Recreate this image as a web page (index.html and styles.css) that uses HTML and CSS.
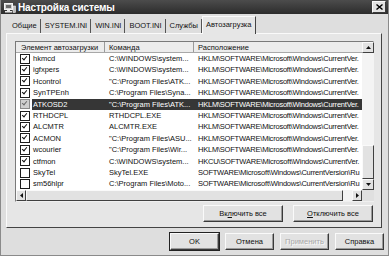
FILE: index.html
```html
<!DOCTYPE html>
<html lang="ru">
<head>
    <meta charset="UTF-8">
    <title>Настройка системы</title>
    <link rel="stylesheet" href="styles.css">
</head>
<body>
<div class="window">
    <div class="titlebar">
        <svg class="app-icon" width="12" height="11" viewBox="0 0 12 11">
            <rect x="0.5" y="1.5" width="8" height="6" fill="#cfcfcf" stroke="#f4f4f4"/>
            <rect x="2" y="3" width="5" height="3" fill="#6a6a6a"/>
            <rect x="3" y="8" width="3" height="1" fill="#e8e8e8"/>
            <rect x="1" y="9" width="7" height="1.5" fill="#e8e8e8"/>
            <rect x="9" y="4" width="2.5" height="6.5" fill="#bdbdbd" stroke="#f0f0f0" stroke-width="0.6"/>
        </svg>
        <span class="title">Настройка системы</span>
        <span class="close-btn">
            <svg width="7" height="6" viewBox="0 0 7 6">
                <path d="M0.5 0.5 L6.5 5.5 M6.5 0.5 L0.5 5.5" stroke="#000" stroke-width="1.4"/>
            </svg>
        </span>
    </div>

    <div class="tabs">
        <span class="tab">Общие</span>
        <span class="tab">SYSTEM.INI</span>
        <span class="tab">WIN.INI</span>
        <span class="tab">BOOT.INI</span>
        <span class="tab">Службы</span>
        <span class="tab active">Автозагрузка</span>
    </div>

    <div class="panel">
        <div class="listview">
            <div class="lv-content">
                <div class="lv-header">
                    <div class="hcell c1">Элемент автозагрузки</div>
                    <div class="hcell c2">Команда</div>
                    <div class="hcell c3">Расположение</div>
                </div>
                <div class="lv-rows">
                    <div class="row">
                        <span class="chk-cell"><span class="check on"></span></span>
                        <span class="row-body"><span class="cell c1">hkmcd</span><span class="cell c2">C:\WINDOWS\system...</span><span class="cell c3">HKLM\SOFTWARE\Microsoft\Windows\CurrentVer.</span></span>
                    </div>
                    <div class="row">
                        <span class="chk-cell"><span class="check on"></span></span>
                        <span class="row-body"><span class="cell c1">igfxpers</span><span class="cell c2">C:\WINDOWS\system...</span><span class="cell c3">HKLM\SOFTWARE\Microsoft\Windows\CurrentVer.</span></span>
                    </div>
                    <div class="row">
                        <span class="chk-cell"><span class="check on"></span></span>
                        <span class="row-body"><span class="cell c1">Hcontrol</span><span class="cell c2">"C:\Program Files\ATK...</span><span class="cell c3">HKLM\SOFTWARE\Microsoft\Windows\CurrentVer.</span></span>
                    </div>
                    <div class="row">
                        <span class="chk-cell"><span class="check on"></span></span>
                        <span class="row-body"><span class="cell c1">SynTPEnh</span><span class="cell c2">C:\Program Files\Syna...</span><span class="cell c3">HKLM\SOFTWARE\Microsoft\Windows\CurrentVer.</span></span>
                    </div>
                    <div class="row selected">
                        <span class="chk-cell"><span class="check on dim"></span></span>
                        <span class="row-body"><span class="cell c1">ATKOSD2</span><span class="cell c2">"C:\Program Files\ATK...</span><span class="cell c3">HKLM\SOFTWARE\Microsoft\Windows\CurrentVer.</span></span>
                    </div>
                    <div class="row">
                        <span class="chk-cell"><span class="check on"></span></span>
                        <span class="row-body"><span class="cell c1">RTHDCPL</span><span class="cell c2">RTHDCPL.EXE</span><span class="cell c3">HKLM\SOFTWARE\Microsoft\Windows\CurrentVer.</span></span>
                    </div>
                    <div class="row">
                        <span class="chk-cell"><span class="check on"></span></span>
                        <span class="row-body"><span class="cell c1">ALCMTR</span><span class="cell c2">ALCMTR.EXE</span><span class="cell c3">HKLM\SOFTWARE\Microsoft\Windows\CurrentVer.</span></span>
                    </div>
                    <div class="row">
                        <span class="chk-cell"><span class="check on"></span></span>
                        <span class="row-body"><span class="cell c1">ACMON</span><span class="cell c2">"C:\Program Files\ASU...</span><span class="cell c3">HKLM\SOFTWARE\Microsoft\Windows\CurrentVer.</span></span>
                    </div>
                    <div class="row">
                        <span class="chk-cell"><span class="check on"></span></span>
                        <span class="row-body"><span class="cell c1">wcourier</span><span class="cell c2">"C:\Program Files\Wir...</span><span class="cell c3">HKLM\SOFTWARE\Microsoft\Windows\CurrentVer.</span></span>
                    </div>
                    <div class="row">
                        <span class="chk-cell"><span class="check on"></span></span>
                        <span class="row-body"><span class="cell c1">ctfmon</span><span class="cell c2">C:\WINDOWS\system...</span><span class="cell c3">HKCU\SOFTWARE\Microsoft\Windows\CurrentVer.</span></span>
                    </div>
                    <div class="row">
                        <span class="chk-cell"><span class="check"></span></span>
                        <span class="row-body"><span class="cell c1">SkyTel</span><span class="cell c2">SkyTel.EXE</span><span class="cell c3">SOFTWARE\Microsoft\Windows\CurrentVersion\Ru</span></span>
                    </div>
                    <div class="row">
                        <span class="chk-cell"><span class="check"></span></span>
                        <span class="row-body"><span class="cell c1">sm56hlpr</span><span class="cell c2">C:\Program Files\Moto...</span><span class="cell c3">SOFTWARE\Microsoft\Windows\CurrentVersion\Ru</span></span>
                    </div>
                </div>
            </div>

            <div class="vscroll">
                <span class="sb-btn">
                    <svg width="5" height="3" viewBox="0 0 5 3"><path d="M0 3 L2.5 0 L5 3 Z" fill="#111"/></svg>
                </span>
                <span class="sb-track"></span>
                <span class="sb-thumb v"></span>
                <span class="sb-btn">
                    <svg width="5" height="3" viewBox="0 0 5 3"><path d="M0 0 L2.5 3 L5 0 Z" fill="#111"/></svg>
                </span>
            </div>
            <div class="hscroll">
                <span class="sb-btn">
                    <svg width="3" height="5" viewBox="0 0 3 5"><path d="M3 0 L0 2.5 L3 5 Z" fill="#111"/></svg>
                </span>
                <span class="sb-thumb h"></span>
                <span class="sb-track"></span>
                <span class="sb-btn">
                    <svg width="3" height="5" viewBox="0 0 3 5"><path d="M0 0 L3 2.5 L0 5 Z" fill="#111"/></svg>
                </span>
            </div>
            <div class="corner"></div>
        </div>

        <div class="panel-buttons">
            <button type="button" class="btn wide">Вк<u>л</u>ючить все</button>
            <button type="button" class="btn wide"><u>О</u>тключить все</button>
        </div>
    </div>

    <div class="dialog-buttons">
        <button type="button" class="btn default">OK</button>
        <button type="button" class="btn">Отмена</button>
        <button type="button" class="btn" disabled>Применить</button>
        <button type="button" class="btn">Справка</button>
    </div>
</div>
</body>
</html>
```

FILE: styles.css
```css
body {
    margin: 0;
    font-family: "Liberation Sans", Arial, sans-serif;
    font-size: 7.5px;
    color: #111;
    background: #fff;
}
.window {
    width: 389px;
    height: 256px;
    box-sizing: border-box;
    background: #dedede;
    border: 1px solid #8a8a8a;
    border-top: none;
    display: flex;
    flex-direction: column;
}
.titlebar {
    height: 14px;
    flex: none;
    display: flex;
    align-items: center;
    padding: 0 2px 0 3px;
    background: linear-gradient(#4c4c4c, #2c2c2c);
    color: #fff;
}
.app-icon {
    flex: none;
}
.title {
    flex: 1;
    margin-left: 2px;
    font-size: 10px;
    font-weight: bold;
    letter-spacing: -0.1px;
}
.close-btn {
    width: 12px;
    height: 10px;
    display: flex;
    align-items: center;
    justify-content: center;
    background: #e2e2e2;
    border: 1px solid #fafafa;
    border-right-color: #3a3a3a;
    border-bottom-color: #3a3a3a;
}

/* tabs */
.tabs {
    display: flex;
    align-items: flex-end;
    height: 19px;
    padding-left: 7px;
    flex: none;
}
.tab {
    height: 14px;
    line-height: 14px;
    padding: 0 3px 0 4px;
    border-right: 1px solid #555;
    white-space: nowrap;
}
.tab.active {
    height: 17px;
    line-height: 16px;
    padding: 0 4px 0 3px;
    background: #e6e6e6;
    border-top: 1px solid #fafafa;
    border-left: 1px solid #fafafa;
    border-right: 1px solid #444;
    margin-bottom: -1px;
    position: relative;
}

.panel {
    margin: 0 6px 0 5px;
    height: 195px;
    box-sizing: border-box;
    padding: 7px 7px 0 8px;
    background: #e6e6e6;
    border: 1px solid #fafafa;
    border-right-color: #444;
    border-bottom-color: #444;
}

/* list view */
.listview {
    display: grid;
    grid-template-columns: 346px 12px;
    grid-template-rows: 148px 11px;
    border: 1px solid #7a7a7a;
    border-right-color: #f0f0f0;
    border-bottom-color: #f0f0f0;
    background: #fff;
}
.lv-content {
    overflow: hidden;
}
.lv-header {
    display: flex;
    height: 11px;
    line-height: 11px;
    background: #ececec;
    border-bottom: 1px solid #a8a8a8;
    box-sizing: border-box;
}
.hcell {
    flex: none;
    box-sizing: border-box;
    border-right: 1px solid #9a9a9a;
    white-space: nowrap;
    overflow: hidden;
}
.hcell.c1 { width: 89px; padding-left: 5px; }
.hcell.c2 { width: 89px; padding-left: 4px; }
.hcell.c3 { width: 168px; padding-left: 4px; border-right: none; }

.row {
    display: flex;
    height: 11.4px;
    line-height: 11.4px;
}
.chk-cell {
    flex: none;
    width: 16px;
    display: flex;
    align-items: center;
}
.check {
    width: 8px;
    height: 8px;
    margin-left: 4px;
    border: 1px solid #1c1c1c;
    background: #fff;
    position: relative;
}
.check.on::after {
    content: "";
    position: absolute;
    left: 2px;
    top: 0px;
    width: 2px;
    height: 4px;
    border: solid #111;
    border-width: 0 1.5px 1.5px 0;
    transform: rotate(40deg);
}
.check.dim {
    background: #cfcfcf;
    border-color: #8a8a8a;
}
.check.dim::after {
    border-color: #6a6a6a;
}
.row-body {
    flex: none;
    display: flex;
    width: 330px;
    white-space: nowrap;
}
.cell {
    flex: none;
    overflow: hidden;
    box-sizing: border-box;
}
.cell.c1 { width: 73px; padding-left: 1px; }
.cell.c2 { width: 89px; padding-left: 4px; }
.cell.c3 { width: 168px; padding-left: 4px; letter-spacing: -0.22px; }
.row.selected .row-body {
    background: #363636;
    color: #fff;
}

/* scrollbars */
.vscroll {
    grid-row: 1;
    grid-column: 2;
    display: flex;
    flex-direction: column;
    background: #f4f4f4;
}
.hscroll {
    grid-row: 2;
    grid-column: 1;
    display: flex;
    background: #f4f4f4;
}
.corner {
    grid-row: 2;
    grid-column: 2;
    background: #e0e0e0;
}
.sb-btn {
    flex: none;
    width: 12px;
    height: 11px;
    box-sizing: border-box;
    display: flex;
    align-items: center;
    justify-content: center;
    background: #e2e2e2;
    border: 1px solid #fafafa;
    border-right-color: #404040;
    border-bottom-color: #404040;
}
.hscroll .sb-btn {
    width: 10px;
}
.sb-track {
    flex: 1;
}
.sb-thumb {
    flex: none;
    box-sizing: border-box;
    background: #e2e2e2;
    border: 1px solid #fafafa;
    border-right-color: #404040;
    border-bottom-color: #404040;
}
.sb-thumb.v {
    height: 34px;
}
.sb-thumb.h {
    width: 317px;
}

/* buttons */
.btn {
    font-family: "Liberation Sans", Arial, sans-serif;
    font-size: 7.5px;
    color: #111;
    height: 17px;
    padding: 0;
    background: #e2e2e2;
    border: 1px solid #fafafa;
    border-right-color: #3a3a3a;
    border-bottom-color: #3a3a3a;
    box-shadow: inset -1px -1px 0 #9a9a9a;
    width: 49px;
}
.btn.wide {
    width: 80px;
}
.btn.default {
    outline: 1px solid #222;
}
.btn:disabled {
    color: #a8a8a8;
    text-shadow: 1px 1px 0 #fafafa;
}
.panel-buttons {
    display: flex;
    justify-content: flex-end;
    gap: 10px;
    margin-top: 3px;
    padding-right: 1px;
}
.dialog-buttons {
    display: flex;
    justify-content: flex-end;
    gap: 6px;
    padding: 5px 4px 0 0;
}
```
